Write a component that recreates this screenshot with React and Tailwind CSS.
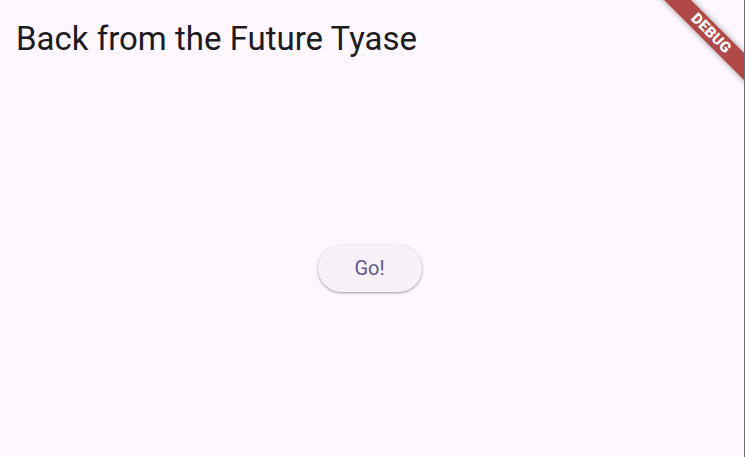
import React from "react";

export default function App() {
  return (
    <div
      className="relative w-[745px] h-[457px] overflow-hidden bg-[#FEF7FF] border-r border-[#6e6e6e] flex flex-col"
      style={{ fontFamily: "Roboto, 'Noto Sans', sans-serif" }}
    >
      <div className="h-[76px] flex items-center pl-4 pt-[1px] shrink-0">
        <h1 className="text-[33px] leading-none text-[#1D1B20] font-normal">
          Back from the Future Tyase
        </h1>
      </div>
      <div className="flex-1 flex items-center justify-center pr-[5px] pt-[3px]">
        <button className="w-[104px] h-[47px] rounded-full bg-[#F7F2FA] text-[#65558F] text-[20px] leading-none shadow-[0_1px_3px_rgba(0,0,0,0.3),0_1px_2px_rgba(0,0,0,0.1)]">
          Go!
        </button>
      </div>
      <div className="absolute left-[645px] top-[24px] w-[132px] h-[19px] rotate-45 bg-[#B04848] shadow-[0_0_6px_rgba(0,0,0,0.4)] flex items-center justify-center">
        <span className="text-white text-[15px] font-black leading-none tracking-[0.3px]">
          DEBUG
        </span>
      </div>
    </div>
  );
}
